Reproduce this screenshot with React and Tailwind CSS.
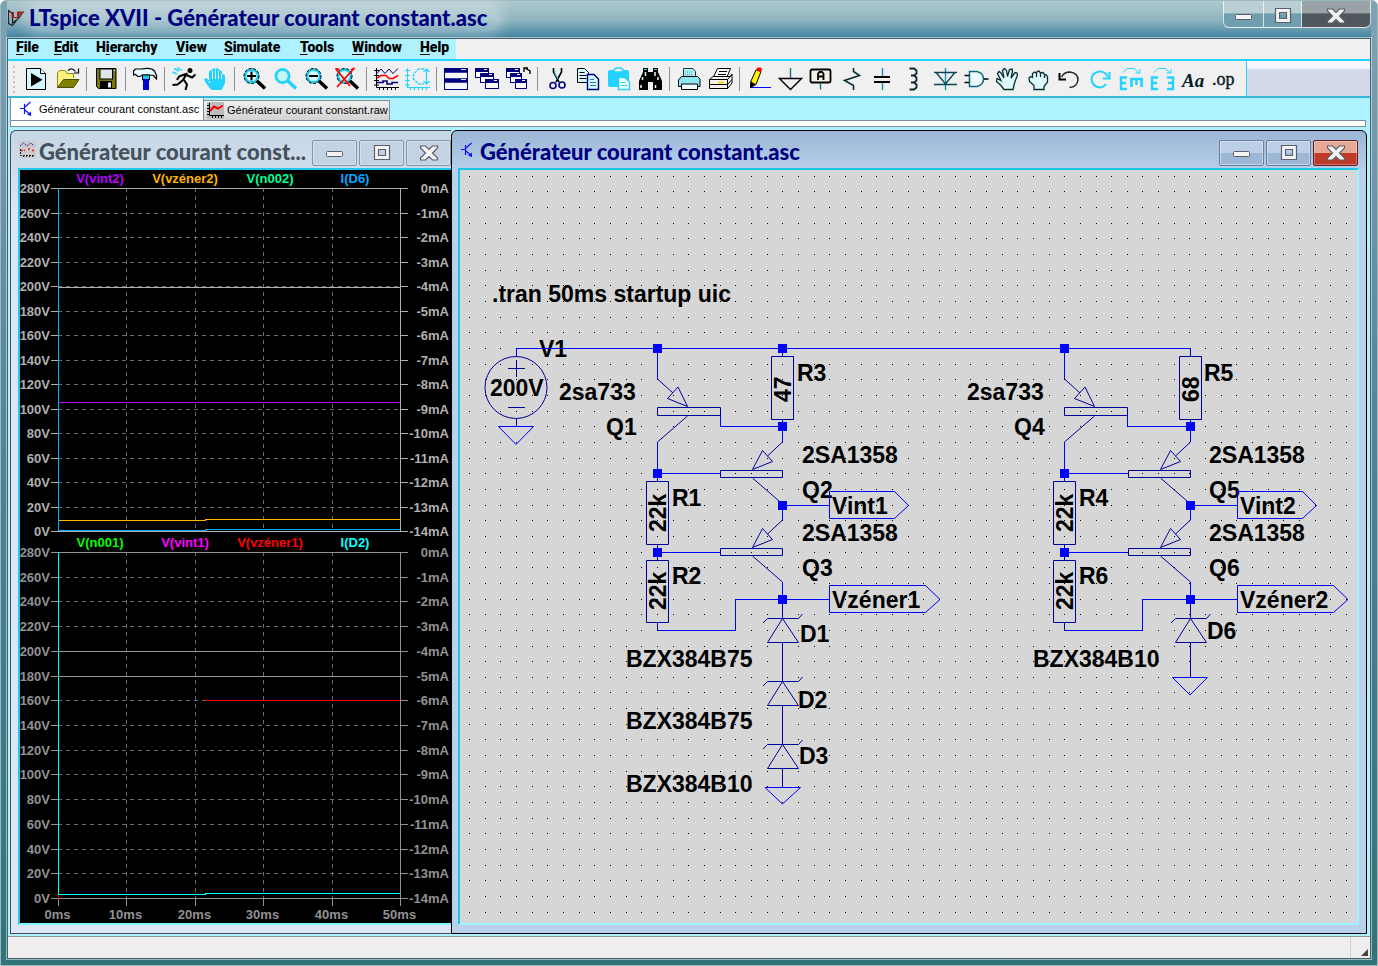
import React from "react";

const CY = "#22d3ff";
const NAVY = "#000080";

/* ---------- toolbar icons, each drawn on a 25 x 24 grid ---------- */

const Magnifier = ({ stroke = "#000", rim = "#1ec8e8", fill = "#d6f7fc", children }) => (
  <>
    <circle cx="9.5" cy="9" r="6.5" fill={fill} stroke={rim} strokeWidth="2.6" />
    <circle cx="9.5" cy="9" r="7.5" fill="none" stroke={stroke} strokeDasharray="3 1.6" />
    <path d="M15 14L23 21.5" stroke={stroke} strokeWidth="3.4" />
    {children}
  </>
);

const MiniWin = ({ x, y, w = 13, h = 9 }) => (
  <>
    <rect x={x + 0.5} y={y + 0.5} width={w} height={h} fill="#fff" stroke={NAVY} />
    <path d={`M${x} ${y + 2}h${w + 1}`} stroke={NAVY} strokeWidth="4" />
    <path d={`M${x + w - 4} ${y + 1.5}h3`} stroke="#fff" />
  </>
);

const icons = {
  run: (
    <>
      <path d="M2.5 1.5H16.5L21.5 6.5V22.5H2.5Z" fill="#d4f8fd" stroke="#000" />
      <path d="M16.5 1.5V6.5H21.5" fill="#fff" stroke="#000" />
      <path d="M7 6V19.5L18.5 12.7Z" fill="#000" />
    </>
  ),
  open: (
    <>
      <path d="M2.5 20.5V5.5L5 3.5H10L12 6.5H18.5V11" fill="#fff27a" stroke="#8a8a1a" />
      <path d="M2.5 20.5L8.5 12.5H24L18.5 20.5Z" fill="#808000" stroke="#4a4a00" />
      <path d="M13 3.5Q17 0 20.5 4.5M23.5 1.5V6H19" fill="none" stroke="#000" strokeWidth="1.2" />
    </>
  ),
  save: (
    <>
      <path d="M2.5 1.5H22V21.5H4.5L2.5 19.5Z" fill="#77770a" stroke="#000" />
      <rect x="6" y="2" width="12.5" height="10" fill="#dfe6e6" stroke="#000" />
      <rect x="6" y="14" width="12" height="7.5" fill="#000" />
      <rect x="14" y="15.5" width="3" height="5" fill="#e8e8e8" />
      <path d="M20 3.5h1" stroke="#fff" />
    </>
  ),
  hammer: (
    <>
      <path d="M0.5 4L2.5 2H8.5Q18 0 21.5 4L23.5 8.5V12L20.5 8.5L16.5 8H9.5L7 9.5H5L2.5 7.5L0.5 8Z" fill="#e6fbff" stroke="#000" strokeWidth="1.2" />
      <path d="M9.5 8H16.5V13H9.5Z" fill="#1ec8e8" stroke="#000" />
      <path d="M10 12H16V23H10Z" fill="#0000cf" />
    </>
  ),
  runner: (
    <>
      <circle cx="18" cy="3.5" r="2.5" fill="#000" />
      <path d="M15 6L11 13L5.5 17.5L0.5 18M12 13L15 17.5L13.5 23M14.5 8L20 10.5L23.5 7.5M13.5 7L7 9.5L5 13" fill="none" stroke="#000" strokeWidth="2" />
      <path d="M2 1.5L7 4M5 0.5L10 3.5M0.5 5L5 7" stroke={CY} strokeWidth="1.4" fill="none" />
    </>
  ),
  handOff: (
    <>
      <path
        d="M8.5 22.5L3.5 16.5L1.5 12.5L3.5 11.5L6.5 14.5V4.5L8 3.5L9.5 4.5V2.5L11 1.5L12.5 2.5L14 1.5L15.5 2.5V4.5L17 3.5L18.5 4.5V8L20 7.5L21.5 8.5V16L18.5 22.5Z"
        fill={CY}
        stroke={CY}
      />
      <path d="M9.5 4V12M12.5 3V12M15.5 4V12M18.5 7V12M6.5 14V16" stroke="#e8f6fa" />
    </>
  ),
  zoomIn: (
    <Magnifier>
      <path d="M5 9H14M9.5 4.5V13.5" stroke="#000" strokeWidth="2" />
    </Magnifier>
  ),
  zoomBox: <Magnifier stroke={CY} rim={CY} fill="#c8f4fc" />,
  zoomOut: (
    <Magnifier>
      <path d="M5 9H14" stroke="#000" strokeWidth="2" />
    </Magnifier>
  ),
  zoomFit: (
    <Magnifier>
      <path d="M0.5 1.5L15 19M19.5 1L2 20M0.5 1.5L4.5 2.5M19.5 1L16 3" stroke="#f00" strokeWidth="1.8" />
    </Magnifier>
  ),
  plot: (
    <>
      <path d="M2.5 1V20.5H25M0 3.5h5M0 8.5h5M0 13.5h5M0 18h5M5.5 20v3M9.5 20v3M13.5 20v3M17.5 20v3M21.5 20v3" fill="none" stroke="#000" />
      <path d="M3 6.5L7 2L11 6.5L15 2L19 6.5L24 1.5" fill="none" stroke={NAVY} />
      <path d="M3 11L7 8.5H12L15 11.5H19L24 8.5" fill="none" stroke="#f00" strokeWidth="1.6" />
      <path d="M3 15.5H9V14H13V17H18V15.5H24" fill="none" stroke={NAVY} strokeWidth="1.6" />
    </>
  ),
  fft: (
    <>
      <path d="M2.5 1V20.5H25M0 3.5h5M0 8.5h5M0 13.5h5M0 18h5M5.5 20v3M9.5 20v3M13.5 20v3M17.5 20v3M21.5 20v3" fill="none" stroke={CY} strokeWidth="1.2" />
      <path d="M19 2H14L8.5 7V12L14 17H19" fill="none" stroke={CY} strokeWidth="1.4" strokeDasharray="3 1" />
      <path d="M21.5 2V17M18.5 5L21.5 2L24.5 5M18.5 14L21.5 17L24.5 14" fill="none" stroke={CY} strokeWidth="1.2" />
    </>
  ),
  tile: (
    <>
      <rect x="0.5" y="1.5" width="23" height="21" fill="#f4f6f8" stroke={NAVY} />
      <path d="M0 3.5H24M0 13.5H24" stroke={NAVY} strokeWidth="4.5" />
      <path d="M17 2.5H22M17 12.5H22" stroke="#cde" />
    </>
  ),
  cascade: (
    <>
      <MiniWin x={0} y={1} />
      <MiniWin x={5} y={6} />
      <MiniWin x={10} y={12} />
    </>
  ),
  closeAll: (
    <>
      <MiniWin x={0} y={1} />
      <MiniWin x={4} y={6} w={11} />
      <MiniWin x={9} y={12} w={11} />
      <path d="M24 7V4L19 1M18 5V1H22" stroke="#000" strokeWidth="1.4" fill="none" />
    </>
  ),
  cut: (
    <>
      <path d="M8.5 1V5L14 15M16.5 1V5L11 15" fill="none" stroke="#000" strokeWidth="1.6" />
      <path d="M10 3V7L13 12" fill="none" stroke={CY} />
      <circle cx="8" cy="18.5" r="3" fill="none" stroke={NAVY} strokeWidth="1.6" />
      <circle cx="17" cy="18" r="3" fill="none" stroke={NAVY} strokeWidth="1.6" />
    </>
  ),
  copy: (
    <>
      <path d="M1.5 1.5H8.5L12.5 5.5V15.5H1.5Z" fill="#d4f8fd" stroke="#000" />
      <path d="M3.5 5.5h5M3.5 8.5h7M3.5 11.5h7" stroke="#000" />
      <path d="M11.5 7.5H18L22.5 12V22.5H11.5Z" fill="#d4f8fd" stroke={NAVY} strokeWidth="1.4" />
      <path d="M14 12.5h4M14 15.5h6M14 18.5h6" stroke="#1f7ab0" />
    </>
  ),
  paste: (
    <>
      <rect x="1" y="3" width="21" height="17" rx="2" fill={CY} />
      <path d="M7 5V3L9 1H14L16 3V5Z" fill="#f0f0f0" stroke={CY} strokeWidth="1.6" />
      <path d="M11.5 10.5H18L22.5 15V22.5H11.5Z" fill="#f2fbfd" stroke={CY} strokeWidth="1.4" />
      <path d="M13.5 15.5h5M13.5 18.5h7" stroke={CY} />
    </>
  ),
  find: (
    <>
      <path d="M5 1H10V5H15V1H20V5L24 14V23H15V15H10V23H1V14L5 5Z" fill="#000" />
      <path d="M4.5 10V13M7.5 5V9M17 5V9M20 10V13M3 18V21M17.5 18V21" stroke="#e8ffff" strokeWidth="1.5" />
      <path d="M6 2.5h3M16 2.5h3" stroke={CY} />
    </>
  ),
  print: (
    <>
      <path d="M6.5 10V1.5H16L18.5 4.5V10" fill="#b4f0f8" stroke="#1d3540" />
      <path d="M1.5 13L4.5 9.5H20.5L23 12V19.5H1.5Z" fill="#8ce8f4" stroke="#000" />
      <path d="M4.5 17V22.5H20.5V17Z" fill="#eefcff" stroke="#000" />
      <path d="M8 5h8M8 7.5h8" stroke="#1ea8c0" strokeDasharray="1 1" />
    </>
  ),
  printSetup: (
    <>
      <path d="M5.5 10L9.5 1.5H22.5L19 10Z" fill="#fff" stroke="#000" />
      <path d="M11 4.5h8M10 7.5h8" stroke="#000" />
      <path d="M1.5 12.5L5 9.5H22L24 7V16L19.5 21.5H1.5Z" fill="#f4f4f4" stroke="#000" />
      <path d="M1.5 12.5H19.5V22M19.5 12.5L23.5 8M1.5 17.5H19.5L24 12.5" fill="none" stroke="#000" />
      <path d="M10 15.5h6" stroke="#ffd800" strokeWidth="2" />
    </>
  ),
  pencil: (
    <>
      <path d="M4 14L9 3L14 4.5L9 17.5L3.5 20.5Z" fill="#fff200" stroke="#000" />
      <path d="M9 3L10.5 0.5H14L15 2.5L14 5Z" fill="#f00" />
      <path d="M3.5 14.5L8.5 17L3 21.5Z" fill="#000" />
      <path d="M4 20.5H24" stroke="#00f" />
    </>
  ),
  ground: (
    <>
      <path d="M12.5 1V11" stroke="#1a6f80" strokeWidth="1.4" />
      <path d="M1.5 11.5H23.5L12.5 22.5Z" fill="none" stroke="#000" strokeWidth="1.4" />
    </>
  ),
  label: (
    <>
      <rect x="1.5" y="2.5" width="20" height="13" rx="1.5" fill="#f4f0e4" stroke="#000" strokeWidth="1.8" />
      <path d="M11.5 16V22.5" stroke="#1a6f80" strokeWidth="1.4" />
      <path d="M9 13V6.5L10.5 5H13L14.5 6.5V13M9 9.5H14.5" fill="none" stroke="#000" strokeWidth="1.8" />
    </>
  ),
  resistor: <path d="M13.5 1V4.5L19.5 8.5L4.5 13.5L13.5 18.5V23" fill="none" stroke="#08303a" strokeWidth="1.6" />,
  capacitor: (
    <>
      <path d="M11.5 1V9M11.5 15V23" stroke="#1a8ea5" strokeWidth="1.4" />
      <path d="M3 10H19M3 15H19" stroke="#000" strokeWidth="2" />
    </>
  ),
  inductor: (
    <path d="M7.5 1.5H12L14.5 3.5V6.5L12 8.5H9H12L14.5 10.5V13.5L12 15.5H9H12L14.5 17.5V20.5L12 22.5H7.5" fill="none" stroke="#062a33" strokeWidth="1.8" />
  ),
  diode: (
    <>
      <path d="M12.5 1V23" stroke="#1a8ea5" strokeWidth="1.4" />
      <path d="M1 5.5H24M1 17.5H24M3.5 6L12.5 17L21.5 6" fill="none" stroke="#0a4654" strokeWidth="1.4" />
    </>
  ),
  gate: (
    <>
      <path d="M5.5 4.5H13Q19.5 6 19.5 12Q19.5 18 13 19.5H5.5Z" fill="#eefcff" stroke="#0a6a80" strokeWidth="1.5" />
      <path d="M0.5 8.5H5M0.5 15.5H5M20 12H24.5" stroke="#000" strokeWidth="1.5" />
    </>
  ),
  move: (
    <path
      d="M9 22.5L6 18.5L1.5 14.5L2 11.5L6 13.5L2.5 6.5L4 4.5L6 6L9 11L7.5 3.5L9.5 1.5L11.5 3.5L12.5 9.5L14.5 2.5L17 2L17.5 4L16 11L20 5.5L22 6L22.5 8L19.5 16L18 22.5Z"
      fill="#dffaff"
      stroke="#0b2c34"
      strokeWidth="1.3"
    />
  ),
  drag: (
    <path
      d="M8 22.5V18.5L3.5 14.5L3 11L4.5 9.5L6.5 10.5V6.5L8.5 5L10.5 6.5L11 4.5L13 4L14.5 6L17 5.5L18.5 7.5L20.5 8L21.5 10V15L18 19.5V22.5ZM10.5 6.5V10M14.5 6V10M18.5 7.5V11"
      fill="#dffaff"
      stroke="#0b2c34"
      strokeWidth="1.3"
    />
  ),
  undo: (
    <>
      <path d="M4.5 10Q7 5 13 5Q21 6 21 13Q20 20 12.5 20.5" fill="none" stroke="#2c2416" strokeWidth="1.5" />
      <path d="M2.5 6V12.5H9" fill="none" stroke="#000" strokeWidth="2" />
    </>
  ),
  redo: (
    <>
      <path d="M20 10Q17 4 11 4.5Q3.5 6 3.5 12.5Q4.5 20 12 20.5Q16 20 18 17" fill="none" stroke={CY} strokeWidth="2" />
      <path d="M21.5 5V11.5H15" fill="none" stroke={CY} strokeWidth="2" />
    </>
  ),
  rotate: (
    <>
      <path d="M4 5.5L8 1.5H15L20 5.5M21 2V6H16.5" fill="none" stroke={CY} />
      <path d="M8 10.5H2V22H8M2 16H7" fill="none" stroke={CY} strokeWidth="2.4" />
      <path d="M11 12H24M12.5 12V20M17.5 12V18M22.5 12V20" fill="none" stroke={CY} strokeWidth="2.6" />
    </>
  ),
  mirror: (
    <>
      <path d="M4 5.5L8 1.5H15L20 5.5M21 2V6H16.5" fill="none" stroke={CY} />
      <path d="M8 10.5H2V22H8M2 16H7" fill="none" stroke={CY} strokeWidth="2.4" />
      <path d="M17 10.5H23V22H17M23 16H18" fill="none" stroke={CY} strokeWidth="2.4" />
    </>
  ),
  text: (
    <text x="1" y="20" fontFamily="Liberation Serif, serif" fontStyle="italic" fontWeight="bold" fontSize="19" fill="#062028">
      Aa
    </text>
  ),
  directive: (
    <text x="0" y="18" fontFamily="Liberation Serif, serif" fontSize="18" fill="#062028" stroke="#062028" strokeWidth="0.4">
      .op
    </text>
  ),
};

const toolbarGroups = [
  [["run", "Run"], ["open", "Open"]],
  [["save", "Save"]],
  [["hammer", "Control Panel"]],
  [["runner", "Simulate"], ["handOff", "Halt"]],
  [["zoomIn", "Zoom in"], ["zoomBox", "Zoom area"], ["zoomOut", "Zoom out"], ["zoomFit", "Zoom full"]],
  [["plot", "Autorange"], ["fft", "Plot settings"]],
  [["tile", "Tile windows"], ["cascade", "Cascade windows"], ["closeAll", "Close windows"]],
  [["cut", "Cut"], ["copy", "Copy"], ["paste", "Paste"], ["find", "Find"]],
  [["print", "Print"], ["printSetup", "Print setup"]],
  [
    ["pencil", "Wire"], ["ground", "Ground"], ["label", "Label net"], ["resistor", "Resistor"],
    ["capacitor", "Capacitor"], ["inductor", "Inductor"], ["diode", "Diode"], ["gate", "Component"],
    ["move", "Move"], ["drag", "Drag"], ["undo", "Undo"], ["redo", "Redo"],
    ["rotate", "Rotate"], ["mirror", "Mirror"], ["text", "Text"], ["directive", "SPICE directive"],
  ],
];

const menus = [
  ["File", 0, "w-[22px]"],
  ["Edit", 0, "w-[26px]"],
  ["Hierarchy", 1, "w-16"],
  ["View", 0, "w-8"],
  ["Simulate", 0, "w-15"],
  ["Tools", 0, "w-9"],
  ["Window", 0, "w-13"],
  ["Help", 0, "w-7"],
];

const TransistorIcon = () => (
  <svg width="16" height="20" viewBox="0 0 16 20" className="shrink-0" aria-hidden="true">
    <path d="M0 9.5H4.5M4.5 5V15M5 8L10.5 3M5 11L10.5 16" fill="none" stroke="#1010ff" strokeWidth="1.2" />
    <path d="M7 15.5L11 12.5V17Z" fill="#1010ff" />
  </svg>
);

const WaveIcon = () => (
  <svg width="17" height="17" viewBox="0 0 17 17" className="shrink-0" aria-hidden="true">
    <rect width="17" height="17" fill="#cbcbcb" />
    <path d="M1 5L4.5 2L8 5L12 2L15 5" fill="none" stroke="#2020c0" strokeDasharray="2 1" />
    <path d="M2 9.5H6M9 8H12M13 9.5H16" stroke="#e02020" strokeWidth="1.3" strokeDasharray="2 1" />
    <path d="M1.5 8V14.5H16M4.5 14v2M7.5 14v2M10.5 14v2M13.5 14v2" fill="none" stroke="#222" strokeDasharray="2 1" />
  </svg>
);

const RawIcon = () => (
  <svg width="17" height="17" viewBox="0 0 17 17" className="shrink-0" aria-hidden="true">
    <rect width="17" height="17" fill="#bdbdbd" />
    <path d="M2.5 1V13.5H17M0 3.5h3M0 6.5h3M0 9.5h3M0 12.5h3M5.5 13v3M8.5 13v3M11.5 13v3M14.5 13v3" fill="none" stroke="#000" />
    <path d="M3 9L7 4.5L11 6.5L16 3.5" fill="none" stroke="#f00" strokeWidth="2" />
  </svg>
);

const glyphs = {
  Minimize: <rect x="4.5" y="9.5" width="16" height="5" rx="1" fill="#f4f4f2" stroke="#5b5f6e" />,
  Maximize: (
    <path d="M5.5 3.5H20.5V17.5H5.5ZM9.5 7.5V13.5H16.5V7.5Z" fill="#f4f4f2" fillRule="evenodd" stroke="#5b5f6e" strokeWidth="1.2" />
  ),
  Close: (
    <path d="M4.5 4H9.5L13 7.5L16.5 4H21.5V6L16.5 11L21.5 16V18H16.5L13 14.5L9.5 18H4.5V16L9.5 11L4.5 6Z" fill="#f4f4f2" stroke="#5b5f6e" strokeWidth="1.2" />
  ),
};

const Glyph = ({ name }) => (
  <svg width="26" height="22" viewBox="0 0 26 22" className="shrink-0" aria-hidden="true">
    {glyphs[name]}
  </svg>
);

function ChildTitle({ icon, title, active }) {
  return (
    <div className="flex h-[37px] shrink-0 items-center">
      {icon}
      <h2
        className={
          "ml-[3px] min-w-0 flex-1 overflow-hidden whitespace-nowrap pt-1 font-[Lato,sans-serif] text-[22px] leading-7 font-black " +
          (active ? "text-[#000080]" : "text-[#45525c]")
        }
      >
        {title}
      </h2>
      <div className="flex shrink-0 gap-0.5 pt-1.5">
        {["Minimize", "Maximize", "Close"].map((n) => (
          <button
            key={n}
            aria-label={n}
            className={
              "flex h-[26px] w-[45px] items-center justify-center rounded-[2px] border " +
              (active
                ? n === "Close"
                  ? "border-[#5a2020] bg-linear-to-b from-[#e8a898] from-50% to-[#c03a28] to-50% inset-ring inset-ring-white/30"
                  : "border-[#66809f] bg-linear-to-b from-[#bccfe6] from-50% to-[#9db8d6] to-50% inset-ring inset-ring-white/40"
                : "border-[#8593a8] bg-[#c4d3e3] inset-ring inset-ring-white/30")
            }
          >
            <Glyph name={n} />
          </button>
        ))}
      </div>
    </div>
  );
}

/* ---------- waveform panes ---------- */

const gridX = [58.5, 126.5, 195.5, 263.5, 332.5, 400.5];
const steps = Array.from({ length: 15 }, (_, i) => i);

function Pane({ top, bottom, color, legends, axisColor, children }) {
  const ys = steps.map((i) => Math.round(top + ((bottom - top) * i) / 14));
  return (
    <g>
      <g shapeRendering="crispEdges" fill="none">
        {ys.slice(1, 14).map((y) => (
          <path key={y} d={`M58 ${y + 0.5}H400`} stroke="#6c6c6c" strokeDasharray="4 4" />
        ))}
        {gridX.slice(1, 5).map((x) => (
          <path key={x} d={`M${x} ${top}V${bottom}`} stroke="#6c6c6c" strokeDasharray="4 4" />
        ))}
        <path d={`M51 ${top + 0.5}H408M51 ${bottom + 0.5}H408M400.5 ${top}V${bottom}`} stroke={color} />
        {ys.map((y) => (
          <path key={y} d={`M51 ${y + 0.5}H58M401 ${y + 0.5}H408`} stroke={color} />
        ))}
        <path d={`M58.5 ${top}V${bottom}`} stroke={axisColor} />
        {children}
      </g>
      <g fill={color} textAnchor="end">
        {ys.map((y, i) => (
          <React.Fragment key={i}>
            <text x="50" y={y + 5}>{280 - i * 20}V</text>
            <text x="449" y={y + 5}>{i ? `-${i}mA` : "0mA"}</text>
          </React.Fragment>
        ))}
      </g>
      {legends.map(([label, fill], i) => (
        <text key={label} x={100 + i * 85} y={top - 5} fill={fill} textAnchor="middle">
          {label}
        </text>
      ))}
    </g>
  );
}

const Waveforms = () => (
  <svg
    width="430"
    height="753"
    viewBox="20 170 430 753"
    className="block shrink-0 overflow-visible font-['Liberation_Sans',Arial,sans-serif] text-[13px] font-bold"
    role="img"
    aria-label="Waveforms"
  >
    <Pane
      top={188}
      bottom={531}
      color="#b0b0b0"
      axisColor="#00b4ff"
      legends={[["V(vint2)", "#b400ff"], ["V(vzéner2)", "#ffb400"], ["V(n002)", "#00ff96"], ["I(D6)", "#00aaff"]]}
    >
      <path d="M58 287.5H400" stroke="#b0b0b0" />
      <path d="M59 402.5H400" stroke="#b400ff" />
      <path d="M59 520.5H205V519.5H400" stroke="#ffb400" />
      <path d="M59 530.5H205V529.5H400" stroke="#00aaff" />
    </Pane>
    <Pane
      top={552}
      bottom={898}
      color="#929292"
      axisColor="#00ffff"
      legends={[["V(n001)", "#00ff00"], ["V(vint1)", "#ff00ff"], ["V(vzéner1)", "#ff0000"], ["I(D2)", "#00ffff"]]}
    >
      <path d="M58 651.5H400M58 676.5H400" stroke="#929292" />
      <path d="M205 700.5H400" stroke="#ff0000" />
      <path d="M59 894.5H205V893.5H400" stroke="#00ffff" />
      <path d="M58.5 895V899" stroke="#ff0000" />
      {gridX.map((x) => (
        <path key={x} d={`M${x} 899V906`} stroke="#929292" />
      ))}
    </Pane>
    <g fill="#929292" textAnchor="middle">
      {gridX.map((x, i) => (
        <text key={x} x={x - 1} y="919">{i * 10}ms</text>
      ))}
    </g>
  </svg>
);

/* ---------- schematic ---------- */

const dotPath = (() => {
  let d = "";
  for (let r = 0; r < 90; r++)
    for (let c = 0; c < 130; c++)
      d += `M${Math.round(469.1 + c * 15.66)} ${Math.round(175.7 + r * 15.66)}.5h1`;
  return d;
})();

const Node = ({ x, y }) => <rect x={x - 4} y={y - 4} width="9" height="9" fill="#0000ff" stroke="none" />;

const T = ({ x, y, children }) => <text x={x} y={y}>{children}</text>;
const TV = ({ x, y, children }) => <text transform={`translate(${x} ${y}) rotate(-90)`}>{children}</text>;

/* Column of the first transistor and its two divider resistors */
const DividerColumn = ({ dx }) => (
  <g transform={`translate(${dx} 0)`}>
    <path stroke="#0000ff" d="M657.5 348V379M657.5 442V473M657 473.5H720M657 552.5H720M720.5 415V426.5H782M657.5 630.5H735.5V599.5H829M657.5 623V630" />
    <path d="M657.5 379L673 393M678 387L667.5 398.5L687.5 406.5ZM657.5 407.5H720.5V415.5H657.5ZM687.5 416L657.5 442M657.5 473V481M646.5 481.5H668.5V544.5H646.5ZM657.5 545V560M646.5 560.5H668.5V622.5H646.5ZM657.5 623V630" />
    <Node x={657} y={348} />
    <Node x={657} y={473} />
    <Node x={657} y={552} />
  </g>
);

const OutputTransistor = ({ y }) => (
  <path
    transform={`translate(0 ${y})`}
    d="M782.5 442L767.5 456M762.5 450.5L772.5 461.5L752.5 469.5ZM720.5 470.5H782.5V477.5H720.5ZM752.5 478L782.5 504"
  />
);

const Zener = ({ y }) => (
  <path transform={`translate(0 ${y - 618})`} d="M763 623L767.5 618.5H798.5L802.5 614M782.5 618.5L767.5 642.5H798.5Z" />
);

/* Column of the sense resistor, the output transistors and the net flags */
const OutputColumn = ({ dx }) => (
  <g transform={`translate(${dx} 0)`}>
    <path d="M782.5 348V356M771.5 356.5H793.5V419.5H771.5ZM782.5 420V426" />
    <OutputTransistor y={0} />
    <OutputTransistor y={78} />
    <path
      stroke="#0000ff"
      d="M782.5 426V442M782.5 505V520M782.5 582V600M782 505.5H829M829.5 491.5H894.5L908.5 505.5L894.5 518.5H829.5ZM829.5 585.5H925.5L940 599.5L925.5 612.5H829.5Z"
    />
    <path d="M782.5 600V618" />
    <Zener y={618} />
    <Node x={782} y={426} />
    <Node x={782} y={505} />
    <Node x={782} y={599} />
  </g>
);

const Schematic = () => (
  <svg width="100%" height="100%" className="block" role="img" aria-label="Schematic">
    <g transform="translate(-460 -170)">
      <path d={dotPath} stroke="#000" shapeRendering="crispEdges" />
      <g fill="#000" className="font-['Liberation_Sans',Arial,sans-serif] text-[23px] font-bold">
        <T x={492} y={302}>.tran 50ms startup uic</T>
        <T x={539} y={357}>V1</T>
        <T x={490} y={396}>200V</T>
        <T x={559} y={400}>2sa733</T>
        <T x={606} y={435}>Q1</T>
        <T x={797} y={381}>R3</T>
        <TV x={791} y={402}>47</TV>
        <T x={672} y={506}>R1</T>
        <TV x={666} y={532}>22k</TV>
        <T x={672} y={584}>R2</T>
        <TV x={666} y={610}>22k</TV>
        <T x={802} y={463}>2SA1358</T>
        <T x={802} y={498}>Q2</T>
        <T x={832} y={514}>Vint1</T>
        <T x={802} y={541}>2SA1358</T>
        <T x={802} y={576}>Q3</T>
        <T x={832} y={608}>Vzéner1</T>
        <T x={800} y={642}>D1</T>
        <T x={798} y={708}>D2</T>
        <T x={799} y={764}>D3</T>
        <T x={626} y={667}>BZX384B75</T>
        <T x={626} y={729}>BZX384B75</T>
        <T x={626} y={792}>BZX384B10</T>
        <T x={967} y={400}>2sa733</T>
        <T x={1014} y={435}>Q4</T>
        <T x={1204} y={381}>R5</T>
        <TV x={1199} y={402}>68</TV>
        <T x={1079} y={506}>R4</T>
        <TV x={1073} y={532}>22k</TV>
        <T x={1079} y={584}>R6</T>
        <TV x={1073} y={610}>22k</TV>
        <T x={1209} y={463}>2SA1358</T>
        <T x={1209} y={498}>Q5</T>
        <T x={1240} y={514}>Vint2</T>
        <T x={1209} y={541}>2SA1358</T>
        <T x={1209} y={576}>Q6</T>
        <T x={1240} y={608}>Vzéner2</T>
        <T x={1207} y={639}>D6</T>
        <T x={1033} y={667}>BZX384B10</T>
      </g>
      <g fill="none" stroke="#00009a" strokeWidth="1">
        <path stroke="#0000ff" d="M516.5 356V348.5H1190.5V350" />
        <circle cx="516" cy="387.5" r="31" />
        <path d="M508 368.5H525M516.5 360V377M508 407.5H525M516.5 419V426" />
        <path stroke="#0000ff" d="M498.5 426.5H533.5L516 444.5Z" />
        <DividerColumn dx={0} />
        <OutputColumn dx={0} />
        <DividerColumn dx={407} />
        <OutputColumn dx={408} />
        <Node x={782} y={348} />
        <Zener y={681} />
        <Zener y={744} />
        <path d="M782.5 643V681M782.5 706V744M782.5 768V787M1190.5 643V677" />
        <path stroke="#0000ff" d="M765 787.5H800.5L782.5 804ZM1172.5 677.5H1207.5L1190 695Z" />
      </g>
    </g>
  </svg>
);

/* ---------- application frame ---------- */

function TitleBar() {
  const base =
    "flex h-[27px] items-center justify-center border border-t-0 border-white/70 bg-linear-to-b ";
  return (
    <header className="flex h-[37px] shrink-0 items-start bg-linear-to-b from-[#aec9ce] via-[#8fb5c0] to-[#3f83a0]">
      <div className="flex h-full min-w-0 flex-1 items-center pb-1 pl-px">
        <svg width="17" height="18" viewBox="0 0 17 18" className="shrink-0" aria-hidden="true">
          <path d="M0.5 1.5L4.5 4.5V14L10.5 9.5L15.5 2.5L4.5 16.5L0.5 14.5Z" fill="none" stroke="#222" strokeWidth="1.2" />
          <path d="M3 3H6V8H9V2.5H16L14.5 5H12L10 9H4Z" fill="#a01818" />
        </svg>
        <h1 className="ml-1 rounded-full bg-white/25 pr-3 font-[Lato,sans-serif] text-[22px] leading-7 font-black whitespace-nowrap text-[#000080] shadow-[0_0_12px_6px_rgba(255,255,255,0.25)]">
          LTspice XVII - Générateur courant constant.asc
        </h1>
      </div>
      <div className="flex shrink-0">
        <button aria-label="Minimize" className={base + "w-[41px] rounded-bl-md from-[#b9cfd3] from-45% to-[#6f9fae] to-50% pt-1"}>
          <Glyph name="Minimize" />
        </button>
        <button aria-label="Maximize" className={base + "w-[38px] border-l-0 from-[#b9cfd3] from-45% to-[#6f9fae] to-50% pt-1"}>
          <Glyph name="Maximize" />
        </button>
        <button aria-label="Close" className={base + "w-[69px] rounded-br-md border-l-0 from-[#9aa3a6] from-45% to-[#4f585e] to-50% pt-1"}>
          <Glyph name="Close" />
        </button>
      </div>
    </header>
  );
}

function Toolbar() {
  return (
    <div className="flex h-[39px] shrink-0 border-y-2 border-[#22d3ff] border-b-[#38b8d8] bg-linear-to-b from-[#f6f8fd] from-20% to-[#d5d9ec] to-25%">
      <div role="toolbar" aria-label="Main" className="flex items-center border-r border-[#22d3ff] bg-[#f0f0f0] pr-[6px]">
        <svg width="13" height="28" viewBox="0 0 13 28" className="shrink-0" aria-hidden="true">
          <path d="M6 1V28" stroke="#c4c4c4" strokeWidth="2" strokeDasharray="2 3" />
        </svg>
        {toolbarGroups.map((group, g) => (
          <React.Fragment key={g}>
            {g > 0 && <span className="mx-[3px] h-6 w-0.5 border-l border-[#909090]" />}
            {group.map(([id, label]) => (
              <button key={id} aria-label={label} className="flex h-8 w-[31px] items-center justify-center">
                <svg width="25" height="24" viewBox="0 0 25 24" aria-hidden="true">
                  {icons[id]}
                </svg>
              </button>
            ))}
          </React.Fragment>
        ))}
      </div>
    </div>
  );
}

export default function App() {
  return (
    <div className="flex min-h-screen flex-col rounded-t-md border border-[#9db9c0] bg-linear-to-b from-[#7fa3b5] via-[#4d8197] to-[#2f7478] px-1.5 pb-1.5">
      <TitleBar />

      <div className="flex flex-1 flex-col border border-[#44616c] bg-[#aef1ff] outline outline-white/50">
        <nav aria-label="Menu" className="flex h-[20px] shrink-0 bg-[#f0f0f0]">
          <div className="flex items-start gap-4 bg-[#b0f1ff] pr-2 pl-2">
            {menus.map(([name, key, width]) => (
              <button
                key={name}
                className={"text-left font-[Roboto,sans-serif] text-[14px] leading-4 font-black whitespace-nowrap text-black " + width}
              >
                {name.slice(0, key)}
                <span className="underline decoration-1 underline-offset-2">{name[key]}</span>
                {name.slice(key + 1)}
              </button>
            ))}
          </div>
        </nav>

        <Toolbar />

        <div role="tablist" className="flex h-[22px] shrink-0 items-end pl-0.5 font-['Liberation_Sans',Arial,sans-serif] text-[11px] text-black">
          <button role="tab" aria-selected="true" className="flex h-[22px] w-[194px] items-center gap-[3px] border-r border-l border-[#7d8c96] bg-white pl-[9px] whitespace-nowrap">
            <TransistorIcon />
            Générateur courant constant.asc
          </button>
          <button role="tab" aria-selected="false" className="flex h-5 w-[186px] items-center gap-[3px] border border-b-0 border-l-0 border-[#888f94] bg-linear-to-b from-[#f0f0f0] to-[#d2d2d2] pl-[3px] whitespace-nowrap">
            <RawIcon />
            Générateur courant constant.raw
          </button>
        </div>
        <div className="mr-1 ml-0.5 h-[7px] shrink-0 border border-[#7d8c96] bg-white" />

        <main className="mt-[3px] flex flex-1 items-stretch bg-[#aef1ff] pr-[3px] pb-0.5 pl-0.5">
          <section className="flex w-[441px] shrink-0 flex-col overflow-hidden rounded-tl-md border border-r-0 border-[#44505c] bg-linear-to-b from-[#c6d5e5] to-[#dbe6f4] to-10%">
            <div className="w-[440px] pl-2">
              <ChildTitle icon={<WaveIcon />} title="Générateur courant const..." />
            </div>
            <div className="mb-2 ml-[7px] flex-1 border-2 border-r-0 border-[#22c8ee] border-b-[#7ff4ff] bg-black">
              <Waveforms />
            </div>
          </section>
          <section className="flex min-w-0 flex-1 flex-col rounded-t-md border border-black bg-linear-to-b from-[#9ab5d6] to-[#b9d1ea] to-5% pr-[7px] pb-2 pl-1.5">
            <div className="pr-px pl-[3px]">
              <ChildTitle icon={<TransistorIcon />} title="Générateur courant constant.asc" active />
            </div>
            <div className="min-h-0 flex-1 overflow-hidden border-2 border-[#1cc4ea] border-r-[#9df4ff] border-b-[#9df4ff] bg-[#d6d6d6]">
              <Schematic />
            </div>
          </section>
        </main>

        <footer className="flex h-[22px] shrink-0 justify-end border-t border-[#8a9a9c] bg-[#f0eeed]">
          <div className="flex w-5 items-end justify-end border-l border-[#d0d0d0] pr-0.5 pb-0.5">
            <svg width="7" height="7" viewBox="0 0 7 7" aria-hidden="true">
              <path d="M7 0V7H0Z" fill="#444" />
            </svg>
          </div>
        </footer>
      </div>
    </div>
  );
}
